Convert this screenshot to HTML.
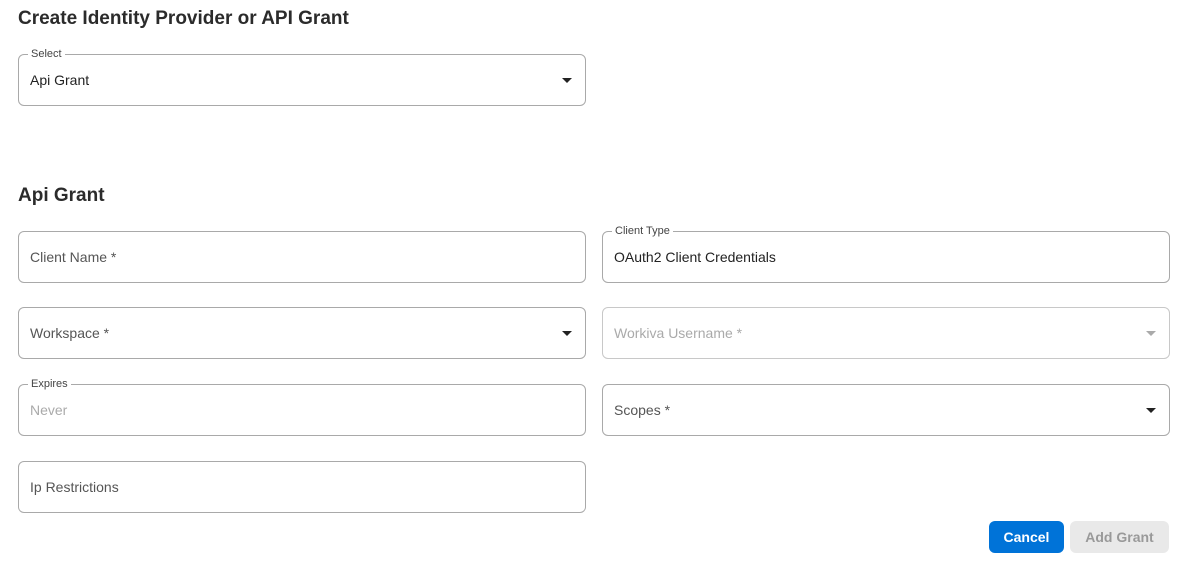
<!DOCTYPE html>
<html><head><style>
body{margin:0;width:1187px;height:565px;background:#fff;font-family:"Liberation Sans",sans-serif;color:#222;position:relative;overflow:hidden}
h1{position:absolute;margin:0;font-size:19px;font-weight:bold;color:#2b2b2b}
.f{position:absolute;box-sizing:border-box;border:1px solid #a9a9a9;border-radius:6px;height:52px;width:568px}
.f span.v{position:absolute;left:11px;top:17px;font-size:14px;color:#222}
.f span.p{color:#555}
.f span.d{color:#aaa}
.f label{position:absolute;left:9px;top:-7px;background:#fff;padding:0 3px;font-size:11px;color:#444}
.ar{position:absolute;right:13px;top:23px;width:0;height:0;border-left:5px solid transparent;border-right:5px solid transparent;border-top:5px solid #222}
.btn{position:absolute;top:521px;height:32px;border-radius:6px;font-size:14px;font-weight:bold;text-align:center;line-height:32px}
</style></head><body>
<h1 style="left:18px;top:8px">Create Identity Provider or API Grant</h1>
<div class="f" style="left:18px;top:54px"><label>Select</label><span class="v">Api Grant</span><div class="ar"></div></div>
<h1 style="left:18px;top:185px">Api Grant</h1>
<div class="f" style="left:18px;top:231px"><span class="v p">Client Name *</span></div>
<div class="f" style="left:602px;top:231px"><label>Client Type</label><span class="v">OAuth2 Client Credentials</span></div>
<div class="f" style="left:18px;top:307px"><span class="v p">Workspace *</span><div class="ar"></div></div>
<div class="f" style="left:602px;top:307px;border-color:#c8c8c8"><span class="v d">Workiva Username *</span><div class="ar" style="border-top-color:#aaa"></div></div>
<div class="f" style="left:18px;top:384px"><label>Expires</label><span class="v d">Never</span></div>
<div class="f" style="left:602px;top:384px"><span class="v p">Scopes *</span><div class="ar"></div></div>
<div class="f" style="left:18px;top:461px"><span class="v p">Ip Restrictions</span></div>
<div class="btn" style="left:989px;width:75px;background:#0073d8;color:#fff">Cancel</div>
<div class="btn" style="left:1070px;width:99px;background:#e9e9e9;color:#999">Add Grant</div>
</body></html>
